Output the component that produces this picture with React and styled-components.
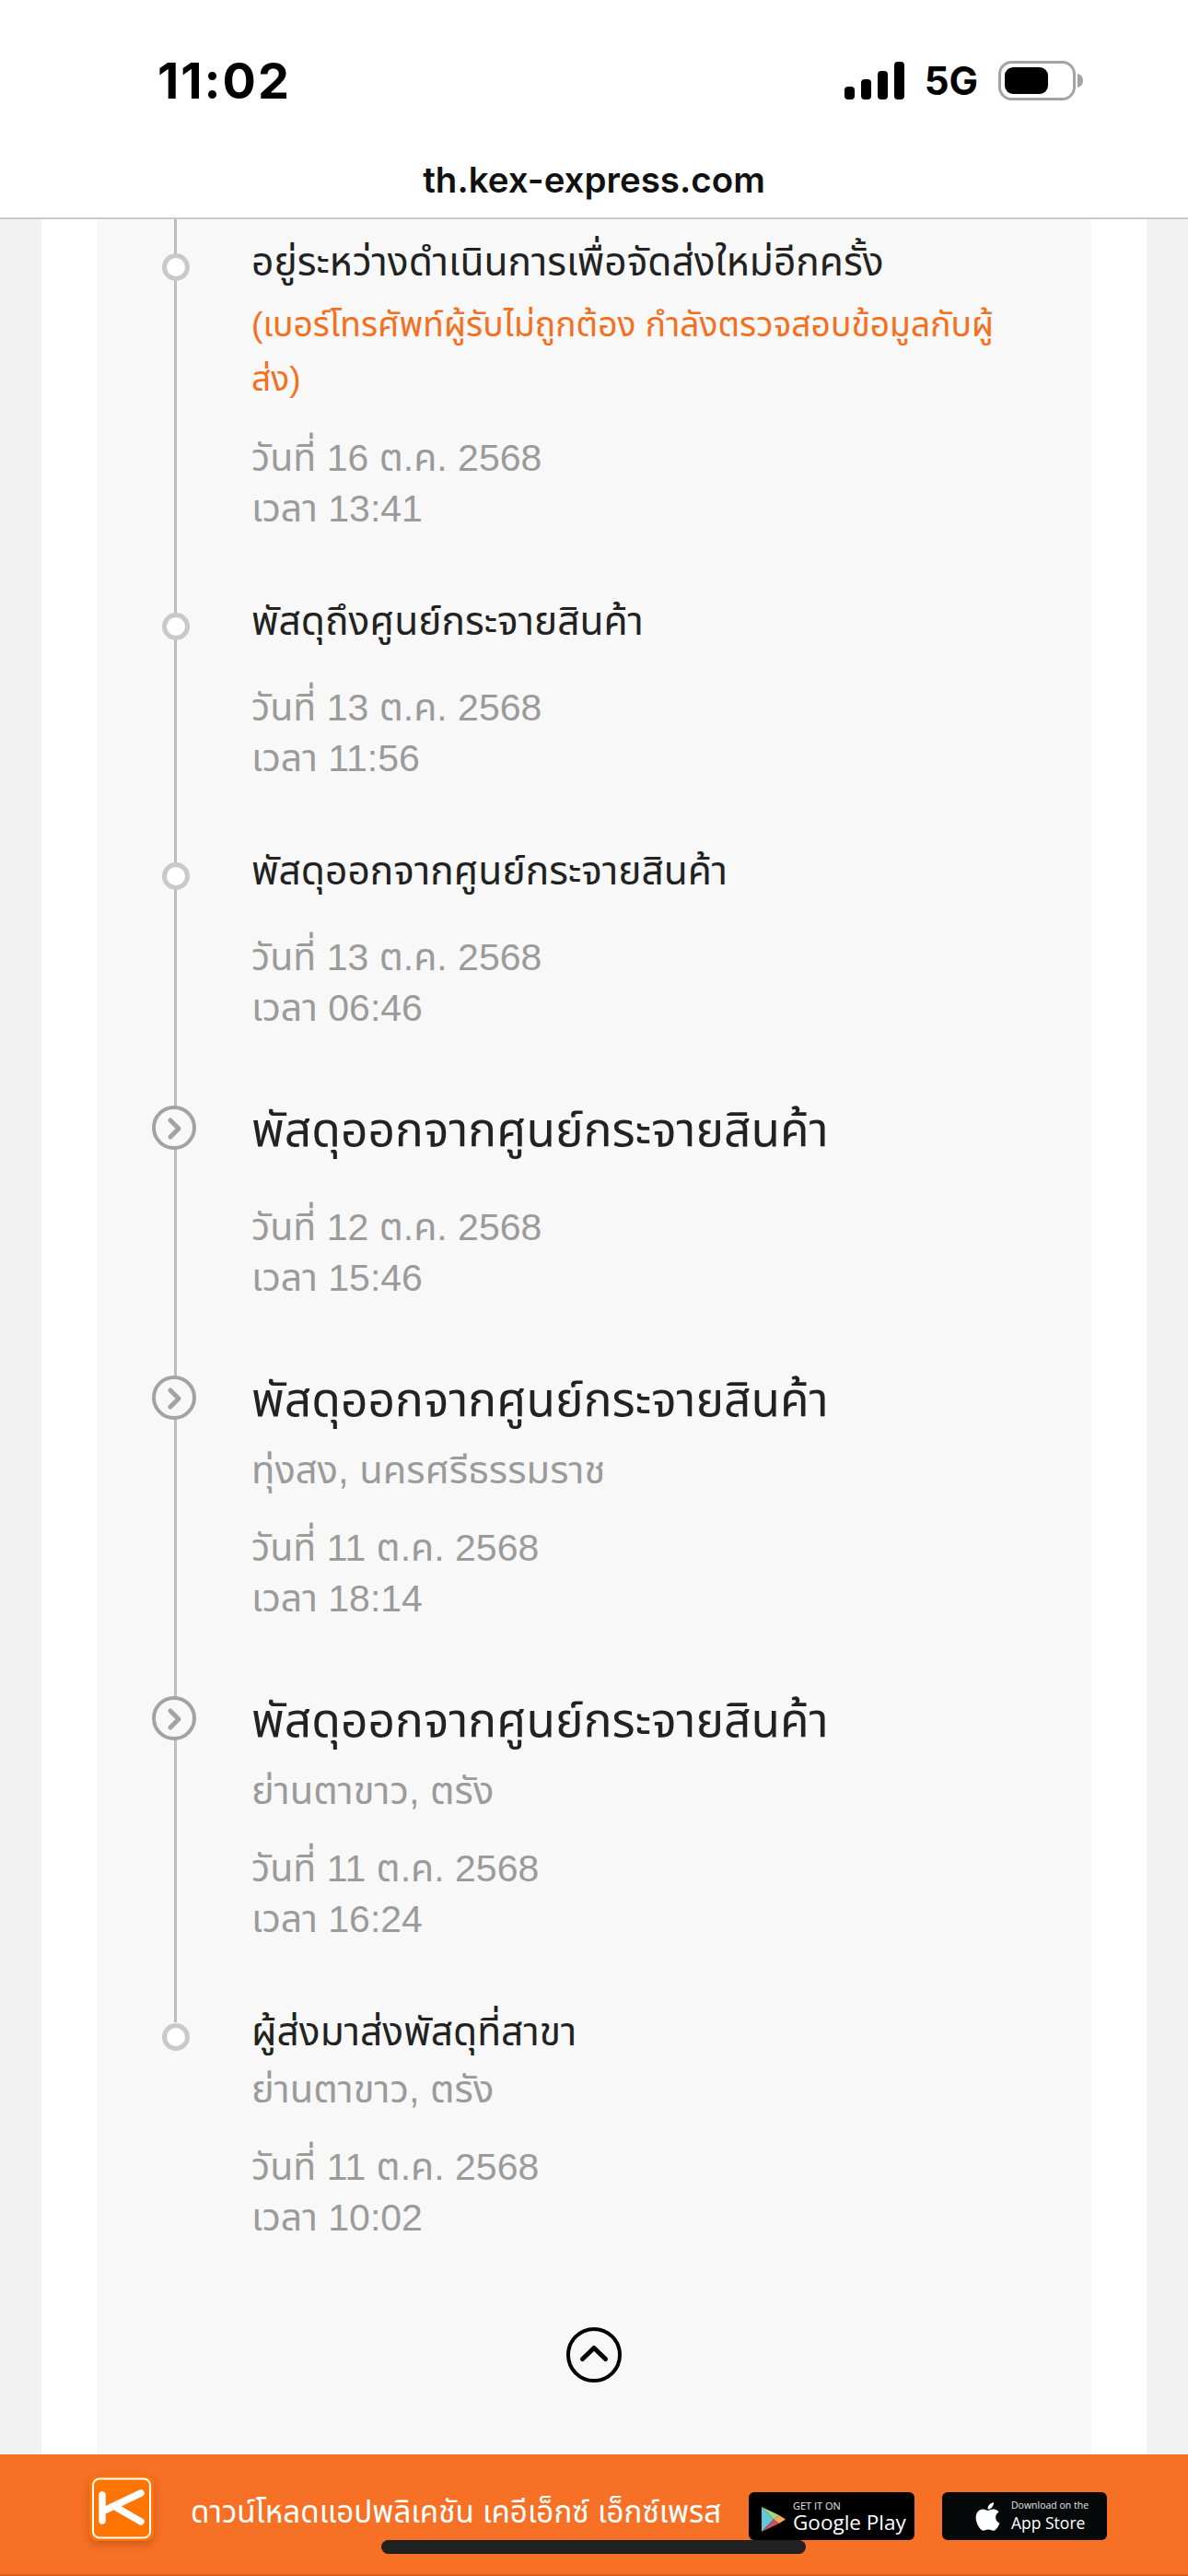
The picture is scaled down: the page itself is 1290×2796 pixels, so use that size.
import React from "react";
import styled, { createGlobalStyle } from "styled-components";
import { FaApple } from "react-icons/fa";

const GlobalStyle = createGlobalStyle`
  html, body {
    margin: 0;
    padding: 0;
    background: #f2f2f2;
  }
  * {
    box-sizing: border-box;
  }
`;

const Page = styled.div`
  position: relative;
  display: flex;
  flex-direction: column;
  width: 1290px;
  height: 2796px;
  overflow: hidden;
  background: #f2f2f2;
  font-family: "Liberation Sans", "Noto Sans Thai", "Noto Sans", "DejaVu Sans", sans-serif;
`;

const TopBar = styled.header`
  flex: none;
  height: 238px;
  background: #fff;
  border-bottom: 2px solid #c9c9c9;
`;

const StatusRow = styled.div`
  display: flex;
  align-items: center;
  justify-content: space-between;
  height: 65px;
  margin-top: 55px;
  padding: 0 114px 0 171px;
`;

const Clock = styled.span`
  font-family: Inter, "Liberation Sans", sans-serif;
  font-size: 54px;
  font-weight: 700;
  letter-spacing: 2px;
  color: #000;
`;

const StatusIcons = styled.div`
  display: flex;
  align-items: center;
  gap: 22px;
`;

const NetworkLabel = styled.span`
  font-family: Inter, "Liberation Sans", sans-serif;
  font-size: 42px;
  font-weight: 700;
  color: #000;
`;

const Address = styled.div`
  margin-top: 53px;
  text-align: center;
  font-family: Inter, "Liberation Sans", sans-serif;
  font-size: 38.500px;
  line-height: 44px;
  font-weight: 600;
  color: #111;
`;

const Gutter = styled.main`
  flex: 1;
  min-height: 0;
  margin: 0 45px;
  padding: 0 60px;
  background: #fff;
`;

const Panel = styled.section`
  height: 100%;
  background: #f8f8f8;
`;

const Timeline = styled.ol`
  margin: 0;
  padding: 16px 0 0;
  list-style: none;
`;

const Row = styled.li`
  position: relative;
  padding: 0 0 ${(p) => (p.$last ? 0 : 64)}px 168px;

  &::before {
    content: "";
    position: absolute;
    left: 84px;
    top: ${(p) => (p.$first ? -16 : 0)}px;
    bottom: ${(p) => (p.$last ? "auto" : 0)}px;
    height: ${(p) => (p.$last ? "20px" : "auto")};
    width: 3px;
    background: #bdbdbd;
  }
`;

const Dot = styled.span`
  position: absolute;
  left: 71px;
  top: 21px;
  width: 30px;
  height: 30px;
  border: 5px solid #c9c9c9;
  border-radius: 50%;
  background: #fff;
`;

const ExpandMark = styled.svg`
  position: absolute;
  left: 60px;
  top: 14px;
  width: 48px;
  height: 48px;
`;

const Title = styled.h3`
  margin: 0;
  font-size: ${(p) => (p.$large ? 51.500 : 42.500)}px;
  line-height: ${(p) => (p.$large ? 80 : 62)}px;
  font-weight: 400;
  color: #222;
`;

const Notice = styled.p`
  margin: 0;
  padding-top: 7px;
  font-size: 37.200px;
  line-height: 59px;
  color: #f4701f;
`;

const Place = styled.p`
  margin: ${(p) => (p.$afterLarge ? 6 : 0)}px 0 0;
  font-size: 41.700px;
  line-height: 62px;
  color: #9b9b9b;
`;

const Stamp = styled.p`
  margin: ${(p) => p.$gap}px 0 0;
  font-size: 41px;
  line-height: 55px;
  color: #9b9b9b;
`;

const CollapseWrap = styled.div`
  display: flex;
  justify-content: center;
  padding-top: 91px;
`;

const Banner = styled.footer`
  flex: none;
  display: flex;
  align-items: center;
  height: 132px;
  padding: 0 88px 12px 97px;
  background: #f67026;
  border-bottom: 2px solid #d9601c;
`;

const Logo = styled.svg`
  flex: none;
  width: 70px;
  height: 72px;
  filter: drop-shadow(0 4px 4px rgba(120, 50, 0, 0.35));
`;

const BannerText = styled.span`
  flex: 1;
  margin: 10px 0 0 40px;
  font-size: 33.200px;
  color: #fff;
  white-space: nowrap;
`;

const Badges = styled.div`
  display: flex;
  gap: 30px;
  padding-top: 16px;
`;

const Badge = styled.div`
  display: flex;
  align-items: center;
  gap: 8px;
  width: ${(p) => (p.$apple ? 179 : 180)}px;
  height: 52px;
  padding-left: ${(p) => (p.$apple ? 32 : 14)}px;
  border-radius: 6px;
  background: ${(p) => (p.$apple ? "#050909" : "#000")};
  color: #fff;
`;

const PlayMark = styled.svg`
  flex: none;
  width: 26px;
  height: 27px;
  margin-top: 7px;
`;

const BadgeLines = styled.div`
  display: flex;
  flex-direction: column;
  font-family: "Open Sans", "Liberation Sans", sans-serif;
`;

const BadgeSmall = styled.span`
  font-size: ${(p) => (p.$apple ? 10.500 : 11)}px;
  line-height: 13px;
  color: #e6e6e6;
`;

const BadgeBig = styled.span`
  font-size: ${(p) => (p.$apple ? 17.500 : 22.500)}px;
  line-height: 24px;
`;

const HomeBar = styled.div`
  position: absolute;
  left: 414px;
  bottom: 24px;
  width: 461px;
  height: 15px;
  border-radius: 8px;
  background: #212121;
`;

const events = [
  {
    title: "อยู่ระหว่างดำเนินการเพื่อจัดส่งใหม่อีกครั้ง",
    notice: ["(เบอร์โทรศัพท์ผู้รับไม่ถูกต้อง กำลังตรวจสอบข้อมูลกับผู้", "ส่ง)"],
    date: "วันที่ 16 ต.ค. 2568",
    time: "เวลา 13:41",
  },
  { title: "พัสดุถึงศูนย์กระจายสินค้า", date: "วันที่ 13 ต.ค. 2568", time: "เวลา 11:56" },
  { title: "พัสดุออกจากศูนย์กระจายสินค้า", date: "วันที่ 13 ต.ค. 2568", time: "เวลา 06:46" },
  { title: "พัสดุออกจากศูนย์กระจายสินค้า", large: true, date: "วันที่ 12 ต.ค. 2568", time: "เวลา 15:46" },
  { title: "พัสดุออกจากศูนย์กระจายสินค้า", large: true, place: "ทุ่งสง, นครศรีธรรมราช", date: "วันที่ 11 ต.ค. 2568", time: "เวลา 18:14" },
  { title: "พัสดุออกจากศูนย์กระจายสินค้า", large: true, place: "ย่านตาขาว, ตรัง", date: "วันที่ 11 ต.ค. 2568", time: "เวลา 16:24" },
  { title: "ผู้ส่งมาส่งพัสดุที่สาขา", place: "ย่านตาขาว, ตรัง", date: "วันที่ 11 ต.ค. 2568", time: "เวลา 10:02" },
];

const stampGap = (ev) => {
  if (ev.notice) return 29;
  if (ev.place) return 26;
  return ev.large ? 39 : 35;
};

const SignalIcon = () => (
  <svg width="65" height="41" viewBox="0 0 65 41">
    <rect x="0" y="27" width="11" height="14" rx="4" fill="#000" />
    <rect x="18" y="19" width="11" height="22" rx="4" fill="#000" />
    <rect x="36" y="10" width="11" height="31" rx="4" fill="#000" />
    <rect x="54" y="0" width="11" height="41" rx="4" fill="#000" />
  </svg>
);

const BatteryIcon = () => (
  <svg width="92" height="43" viewBox="0 0 92 43">
    <rect x="1.500" y="1.500" width="81" height="40" rx="13" fill="none" stroke="#a3a3a3" strokeWidth="3" />
    <rect x="7" y="7" width="47" height="29" rx="9" fill="#000" />
    <path d="M86 14c4 1 6 4 6 7.500s-2 6.500-6 7.500z" fill="#a3a3a3" />
  </svg>
);

const GooglePlayMark = () => (
  <PlayMark viewBox="0 0 26 27">
    <path d="M0 0l13 13.500L0 27z" fill="#5fc9d8" />
    <path d="M0 0l19 9-6 4.500z" fill="#a4d77a" />
    <path d="M19 9l7 4.500-7 4.500-6-4.500z" fill="#f5a85c" />
    <path d="M0 27l19-9-6-4.500z" fill="#c8546a" />
  </PlayMark>
);

const App = () => (
  <Page>
    <GlobalStyle />
    <TopBar>
      <StatusRow>
        <Clock>11:02</Clock>
        <StatusIcons>
          <SignalIcon />
          <NetworkLabel>5G</NetworkLabel>
          <BatteryIcon />
        </StatusIcons>
      </StatusRow>
      <Address>th.kex-express.com</Address>
    </TopBar>
    <Gutter>
      <Panel>
        <Timeline>
          {events.map((ev, i) => (
            <Row key={i} $first={i === 0} $last={i === events.length - 1}>
              {ev.large ? (
                <ExpandMark viewBox="0 0 48 48">
                  <circle cx="24" cy="24" r="22" fill="#f8f8f8" stroke="#a3a3a3" strokeWidth="4" />
                  <path d="M20 16l9 9-9 9" fill="none" stroke="#a3a3a3" strokeWidth="5" strokeLinecap="round" strokeLinejoin="round" />
                </ExpandMark>
              ) : (
                <Dot />
              )}
              <Title $large={ev.large}>{ev.title}</Title>
              {ev.notice && (
                <Notice>
                  {ev.notice[0]}
                  <br />
                  {ev.notice[1]}
                </Notice>
              )}
              {ev.place && <Place $afterLarge={ev.large}>{ev.place}</Place>}
              <Stamp $gap={stampGap(ev)}>
                {ev.date}
                <br />
                {ev.time}
              </Stamp>
            </Row>
          ))}
        </Timeline>
        <CollapseWrap>
          <svg width="60" height="60" viewBox="0 0 60 60">
            <circle cx="30" cy="30" r="28" fill="none" stroke="#000" strokeWidth="4" />
            <path d="M17.500 34.500L30 22.500l12.500 12" fill="none" stroke="#000" strokeWidth="5" strokeLinecap="round" strokeLinejoin="round" />
          </svg>
        </CollapseWrap>
      </Panel>
    </Gutter>
    <Banner>
      <Logo viewBox="0 0 70 72">
        <rect x="0" y="0" width="70" height="71" rx="9" fill="#ff7504" />
        <rect x="4" y="3.500" width="62" height="64" rx="7" fill="none" stroke="#fff" strokeWidth="2" />
        <path d="M14 21v28M14 39l42-20M30 35l26 15" fill="none" stroke="#fff" strokeWidth="7.500" strokeLinecap="round" />
      </Logo>
      <BannerText>ดาวน์โหลดแอปพลิเคชัน เคอีเอ็กซ์ เอ็กซ์เพรส</BannerText>
      <Badges>
        <Badge>
          <GooglePlayMark />
          <BadgeLines>
            <BadgeSmall>GET IT ON</BadgeSmall>
            <BadgeBig>Google Play</BadgeBig>
          </BadgeLines>
        </Badge>
        <Badge $apple>
          <FaApple size={35} />
          <BadgeLines>
            <BadgeSmall $apple>Download on the</BadgeSmall>
            <BadgeBig $apple>App Store</BadgeBig>
          </BadgeLines>
        </Badge>
      </Badges>
    </Banner>
    <HomeBar />
  </Page>
);

export default App;
